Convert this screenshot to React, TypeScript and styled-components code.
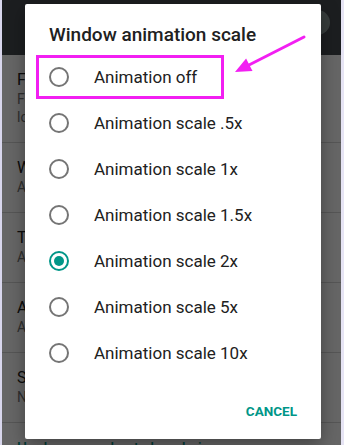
import React from "react";
import styled, { createGlobalStyle } from "styled-components";

const GlobalStyle = createGlobalStyle`
  html, body { margin: 0; padding: 0; background: #fff; }
  * { box-sizing: border-box; }
`;

const Page = styled.div`
  position: relative;
  width: 344px;
  height: 445px;
  overflow: hidden;
  background: #fff;
  border-left: 2px solid #d8d6ec;
  border-right: 3px solid #e6e4f4;
  display: flex;
  flex-direction: column;
  font-family: Roboto, "Noto Sans", Arial, sans-serif;
`;

const TopBar = styled.div`
  height: 55px;
  flex: none;
  background: #464b50;
  display: flex;
  align-items: center;
  justify-content: flex-end;
  padding-right: 11px;
`;

const BarIcon = styled.div`
  width: 25px;
  height: 25px;
  border-radius: 50%;
  background: #8a9896;
  margin-top: -10px;
`;

const SettingRow = styled.div`
  padding: 15px 0 16px 15px;
  border-bottom: 1px solid #d6d6d6;
`;

const SettingTitle = styled.div`
  font-size: 16px;
  line-height: 20px;
  color: #212121;
  white-space: nowrap;
`;

const SettingSummary = styled.div`
  font-size: 14px;
  line-height: 18px;
  color: #757575;
  white-space: nowrap;
`;

const Category = styled.div`
  padding: 16px 0 0 15px;
  font-size: 14px;
  line-height: 18px;
  font-weight: 500;
  color: #009688;
`;

const Scrim = styled.div`
  position: absolute;
  inset: 0;
  background: rgba(0, 0, 0, 0.6);
`;

const Dialog = styled.div`
  position: absolute;
  left: 23px;
  top: 4px;
  width: 296px;
  height: 435px;
  background: #fff;
  border-radius: 2px;
  box-shadow: 0 6px 18px rgba(0, 0, 0, 0.35);
  display: flex;
  flex-direction: column;
`;

const DialogTitle = styled.div`
  padding: 18px 24px 7px 24px;
  font-size: 19px;
  line-height: 25px;
  font-weight: 500;
  color: #212121;
`;

const OptionList = styled.div`
  display: flex;
  flex-direction: column;
`;

const OptionRow = styled.div`
  height: 46px;
  display: flex;
  align-items: center;
  padding-left: 24px;
`;

const Radio = styled.div<{ $checked?: boolean }>`
  width: 20px;
  height: 20px;
  flex: none;
  border-radius: 50%;
  border: 2px solid ${(p) => (p.$checked ? "#009688" : "#757575")};
  display: flex;
  align-items: center;
  justify-content: center;
  &::after {
    content: "";
    display: ${(p) => (p.$checked ? "block" : "none")};
    width: 10px;
    height: 10px;
    border-radius: 50%;
    background: #009688;
  }
`;

const OptionLabel = styled.div`
  margin-left: 25px;
  font-size: 17px;
  line-height: 20px;
  color: #212121;
`;

const ButtonBar = styled.div`
  flex: 1;
  display: flex;
  align-items: center;
  justify-content: flex-end;
  padding: 7px 24px 0 0;
`;

const TextButton = styled.div`
  font-size: 13.5px;
  font-weight: 700;
  color: #009688;
`;

const Highlight = styled.div`
  position: absolute;
  left: 11px;
  top: 51px;
  width: 188px;
  height: 44px;
  border: 3px solid #f21ff2;
`;

const ArrowSvg = styled.svg`
  position: absolute;
  left: 0;
  top: 0;
  pointer-events: none;
`;

const settings = [
  { t: "Force RTL layout direction", s: ["Force screen layout direction to RTL", "locales"] },
  { t: "Window animation scale", s: ["Animation scale 2x"] },
  { t: "Transition animation scale", s: ["Animation scale 2x"] },
  { t: "Animator duration scale", s: ["Animation scale 1x"] },
  { t: "Simulate secondary displays", s: ["None"] },
];

const options = [
  "Animation off",
  "Animation scale .5x",
  "Animation scale 1x",
  "Animation scale 1.5x",
  "Animation scale 2x",
  "Animation scale 5x",
  "Animation scale 10x",
];

export default function App() {
  return (
    <>
      <GlobalStyle />
      <Page>
        <TopBar>
          <BarIcon />
        </TopBar>
        {settings.map((r) => (
          <SettingRow key={r.t}>
            <SettingTitle>{r.t}</SettingTitle>
            {r.s.map((line) => (
              <SettingSummary key={line}>{line}</SettingSummary>
            ))}
          </SettingRow>
        ))}
        <Category>Hardware accelerated rendering</Category>
        <Scrim />
        <Dialog>
          <DialogTitle>Window animation scale</DialogTitle>
          <OptionList>
            {options.map((o) => (
              <OptionRow key={o}>
                <Radio $checked={o === "Animation scale 2x"} />
                <OptionLabel>{o}</OptionLabel>
              </OptionRow>
            ))}
          </OptionList>
          <ButtonBar>
            <TextButton>CANCEL</TextButton>
          </ButtonBar>
          <Highlight />
        </Dialog>
        <ArrowSvg width="344" height="445" viewBox="-2 0 344 445">
          <line x1="300" y1="37" x2="242" y2="66.5" stroke="#f21ff2" strokeWidth="3" strokeLinecap="round" />
          <polygon points="231,72 242.1,58.6 248.5,71" fill="#f21ff2" />
        </ArrowSvg>
      </Page>
    </>
  );
}
